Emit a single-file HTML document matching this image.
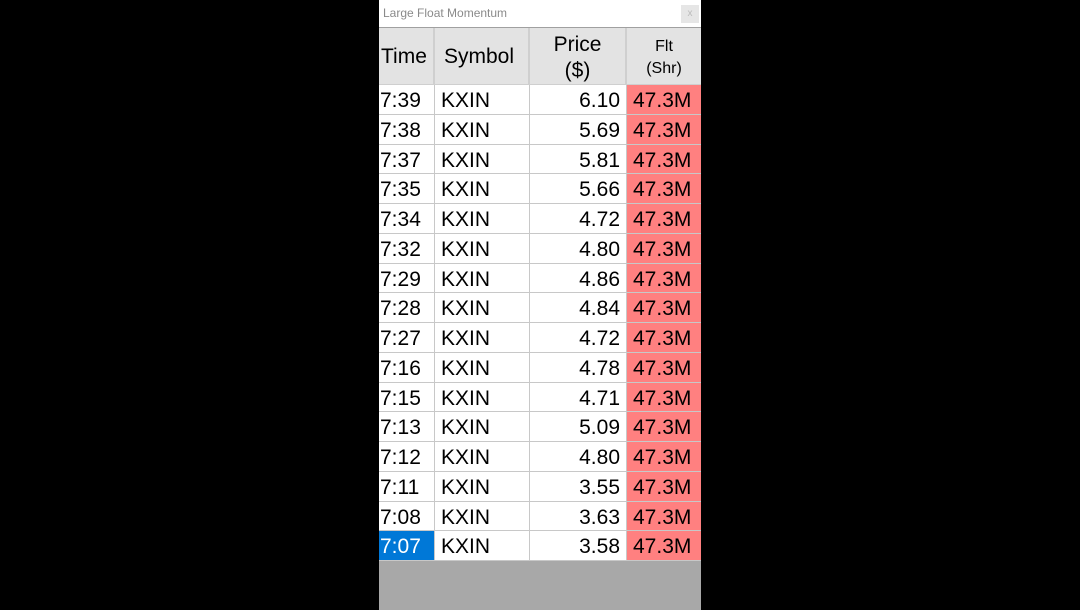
<!DOCTYPE html>
<html><head><style>
body{margin:0;width:1080px;height:610px;background:#000;position:relative;overflow:hidden;font-family:"Liberation Sans",Arial,sans-serif}
#w{position:absolute;left:379px;top:0;width:322px;height:610px;background:#a8a8a8}
#t{position:absolute;left:0;top:0;width:322px;height:27px;background:#fff;border-bottom:1px solid #a0a0a0}
#t span{position:absolute;left:4px;top:6px;font-size:12px;color:#8a8a8a}
#x{position:absolute;right:2px;top:5px;width:18px;height:18px;background:#e6e6e6;color:#bbb;font-size:10px;text-align:center;line-height:18px}
.c{position:absolute;box-sizing:border-box;border-right:1px solid #c8c8c8;border-bottom:1px solid #c8c8c8;color:#000;white-space:nowrap;overflow:hidden}
.h{background:#e3e3e3;top:28px;height:57px;border-right:2px solid #cfcfcf;border-bottom:1px solid #cfcfcf}
</style></head><body><div id="w">
<div id="t"><span>Large Float Momentum</span><div id="x">x</div></div>
<div class="c h" style="left:0;width:56px;font-size:21px;line-height:58px;padding-left:2px">Time</div>
<div class="c h" style="left:56px;width:95px;font-size:21px;line-height:58px;padding-left:9px">Symbol</div>
<div class="c h" style="left:151px;width:97px;font-size:21px;line-height:26px;text-align:center;padding-top:4px">Price<br>($)</div>
<div class="c h" style="left:248px;width:74px;font-size:16px;line-height:22px;text-align:center;padding-top:8px;border-right:none">Flt<br>(Shr)</div>
<div id="rows"></div>
</div>
<script>
var d=[["7:39","6.10"],["7:38","5.69"],["7:37","5.81"],["7:35","5.66"],["7:34","4.72"],["7:32","4.80"],["7:29","4.86"],["7:28","4.84"],["7:27","4.72"],["7:16","4.78"],["7:15","4.71"],["7:13","5.09"],["7:12","4.80"],["7:11","3.55"],["7:08","3.63"],["7:07","3.58"]];
var h="";
d.forEach(function(r,i){var t=85+i*29.75,s="top:"+t+"px;height:29.75px;line-height:32px;font-size:21px;";
var tb=i==15?"background:#0078d7;color:#fff;":"background:#fff;";
h+='<div class="c" style="'+s+'left:0;width:56px;padding-left:1px;'+tb+'">'+r[0]+'</div>';
h+='<div class="c" style="'+s+'left:56px;width:95px;padding-left:6px;background:#fff">KXIN</div>';
h+='<div class="c" style="'+s+'left:151px;width:97px;padding-right:6px;text-align:right;background:#fff">'+r[1]+'</div>';
h+='<div class="c" style="'+s+'left:248px;width:74px;padding-left:6px;background:#ff8080;border-right:none">47.3M</div>';});
document.getElementById("rows").innerHTML=h;
</script>
</body></html>
